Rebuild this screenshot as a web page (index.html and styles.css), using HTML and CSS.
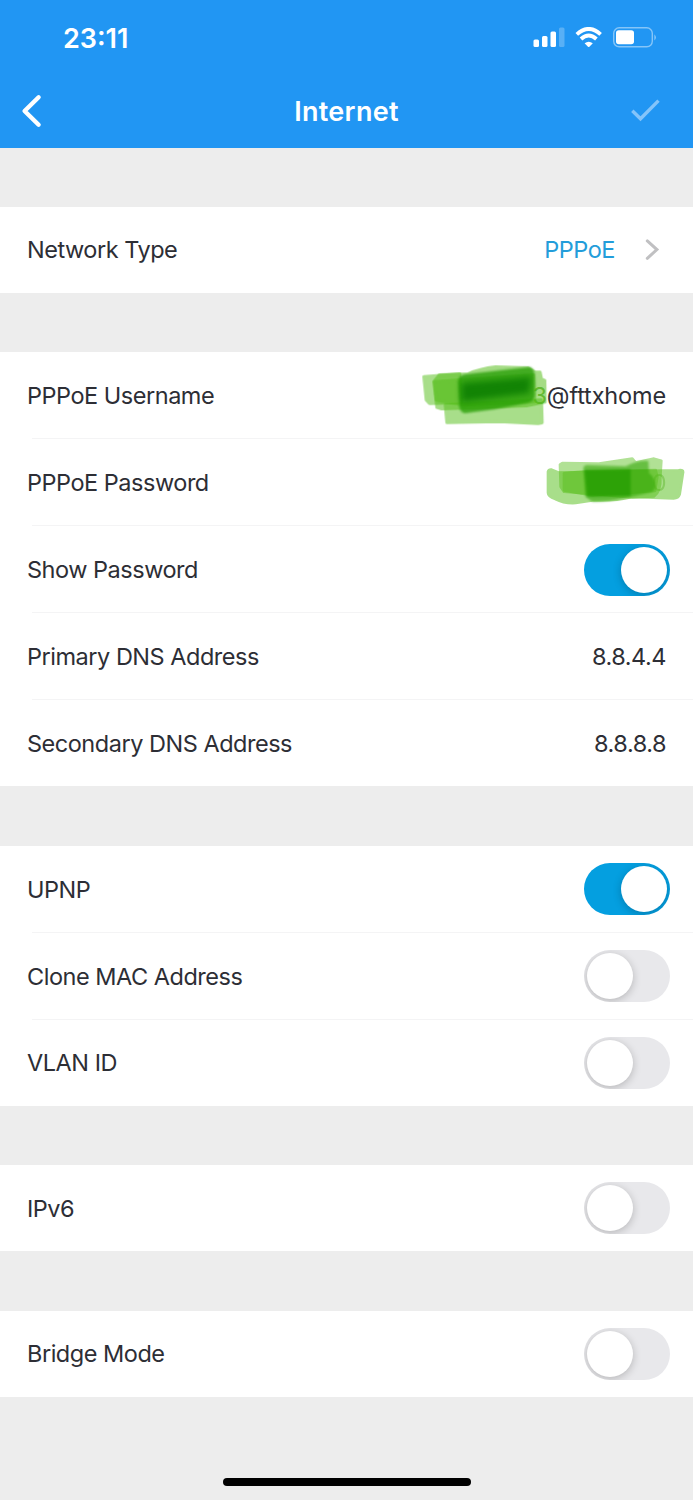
FILE: index.html
```html
<!DOCTYPE html>
<html lang="en">
<head>
    <meta charset="UTF-8">
    <meta name="viewport" content="width=device-width, initial-scale=1.0">
    <title>Internet</title>
    <link rel="stylesheet" href="styles.css">
</head>
<body>
    <div class="screen">
        <header class="header">
            <div class="status-bar">
                <span class="time">23:11</span>
                <svg class="status-icons" width="124" height="22" viewBox="0 0 124 22">
                    <g fill="#fff">
                        <rect x="0.5" y="12.5" width="5.5" height="7.5" rx="1.5"/>
                        <rect x="9" y="9" width="5.5" height="11" rx="1.5"/>
                        <rect x="17.5" y="4.5" width="5.5" height="15.5" rx="1.5"/>
                        <rect x="26" y="0.5" width="5.5" height="19.5" rx="1.5" opacity="0.25"/>
                        <path d="M55 19.7 L51.6 16.2 Q55.7 13.2 59.8 16.2 L56.4 19.7 Q55.7 20.3 55 19.7Z"/>
                        <rect x="83" y="3.3" width="18" height="14" rx="2.8"/>
                        <path d="M121.5 7.2 Q124 10.5 121.5 13.6Z" opacity="0.6"/>
                    </g>
                    <g fill="none" stroke="#fff" stroke-width="3.8">
                        <path d="M43.8 7.4 Q55.7 -3.6 67.6 7.4"/>
                        <path d="M48 12 Q55.7 4.8 63.4 12"/>
                    </g>
                    <rect x="80.7" y="0.8" width="38.6" height="19" rx="5.5" fill="none" stroke="#fff" stroke-width="1.4" opacity="0.45"/>
                </svg>
            </div>
            <div class="nav-bar">
                <svg width="24" height="36" viewBox="0 0 24 36" fill="none" stroke="#fff" stroke-width="4.4" stroke-linecap="round" stroke-linejoin="round">
                    <path d="M18.6 4.3 L4.6 18 L18.6 31.7"/>
                </svg>
                <h1 class="title">Internet</h1>
                <svg class="done" width="30" height="24" viewBox="0 0 30 24" fill="none" stroke="#84c4fa" stroke-width="3.4">
                    <path d="M2.3 11.8 L10.5 19.8 L28.5 1.6"/>
                </svg>
            </div>
        </header>

        <main class="content">
            <section class="group">
                <div class="row">
                    <span class="label">Network Type</span>
                    <span class="link">
                        PPPoE
                        <svg width="16" height="22" viewBox="0 0 16 22" fill="none" stroke="#c0c0c2" stroke-width="3" stroke-linecap="round">
                            <path d="M3.3 1.9 L12.9 10.6 L3.3 19.3"/>
                        </svg>
                    </span>
                </div>
            </section>

            <section class="group">
                <div class="row">
                    <span class="label">PPPoE Username</span>
                    <span class="value username"><span class="ghost">3</span>@fttxhome
                        <svg class="marker marker-user" width="128" height="64" viewBox="34 42 384 192">
                            <g class="ink" fill="#53bd16" stroke="#53bd16" stroke-width="10" stroke-linejoin="round">
                                <path d="M43 80 L150 72 L155 157 L60 160 L50 150Z" opacity=".5"/>
                                <path d="M107 165 L395 150 L397 218 L385 220 L270 214 L112 217Z" opacity=".5"/>
                                <path d="M73 95 L89 75 L175 72 Q210 56 258 51 L355 54 L376 67 L391 67 L395 87 L405 92 L406 156 L350 167 L96 176 L82 172Z" opacity=".52"/>
                                <path d="M75 95 L372 75 L375 155 L160 165 L80 150Z" opacity=".42"/>
                            </g>
                            <path class="soft" d="M145 94 Q148 75 167 73 L360 51 Q375 56 374 76 L375 136 Q373 156 352 159 L255 178 L165 190 Q151 188 149 169Z" fill="#239c00" opacity=".75"/>
                            <path class="core" d="M155 98 L365 80 L359 130 L155 155Z" fill="#087a00" opacity=".8"/>
                        </svg>
                    </span>
                </div>
                <div class="row">
                    <span class="label">PPPoE Password</span>
                    <span class="value">
                        <svg class="marker marker-pass" width="142" height="50" viewBox="408 318 426 150">
                            <g class="ink" fill="#53bd16" stroke="#53bd16" stroke-width="8" stroke-linejoin="round">
                                <path d="M417 365 Q419 358 428 359 L450 368 L809 361 Q824 358 822 368 L812 433 Q808 445 794 445 L670 441 Q615 454 550 451 L500 459 Q465 461 439 447 Q417 439 417 428Z" opacity=".5"/>
                                <path d="M453 344 L460 339 L570 341 L670 326 L680 338 L735 326 L757 332 L754 380 Q756 426 735 439 L670 442 L530 430 L465 425 L455 410Z" opacity=".45"/>
                                <path d="M465 370 L530 364 L740 360 L745 380 L738 423 L550 436 L465 421Z" opacity=".4"/>
                            </g>
                            <path class="soft" d="M523 354 Q525 345 535 345 L650 349 Q690 330 718 333 L720 370 Q738 380 738 410 Q738 426 718 429 L650 444 Q580 458 550 455 L529 440Z" fill="#2ca400" opacity=".55"/>
                            <path class="soft" d="M527 360 L665 358 L665 438 L535 440Z" fill="#229c00" opacity=".7"/>
                        </svg>
                        <span class="ghost ghost-end">0</span>
                    </span>
                </div>
                <div class="row">
                    <span class="label">Show Password</span>
                    <span class="switch on"></span>
                </div>
                <div class="row">
                    <span class="label">Primary DNS Address</span>
                    <span class="value">8.8.4.4</span>
                </div>
                <div class="row">
                    <span class="label">Secondary DNS Address</span>
                    <span class="value">8.8.8.8</span>
                </div>
            </section>

            <section class="group">
                <div class="row">
                    <span class="label">UPNP</span>
                    <span class="switch on"></span>
                </div>
                <div class="row">
                    <span class="label">Clone MAC Address</span>
                    <span class="switch"></span>
                </div>
                <div class="row">
                    <span class="label">VLAN ID</span>
                    <span class="switch"></span>
                </div>
            </section>

            <section class="group">
                <div class="row">
                    <span class="label">IPv6</span>
                    <span class="switch"></span>
                </div>
            </section>

            <section class="group">
                <div class="row">
                    <span class="label">Bridge Mode</span>
                    <span class="switch"></span>
                </div>
            </section>
        </main>
        <div class="home-indicator"></div>
    </div>
</body>
</html>
```
FILE: styles.css
```css
* {
    box-sizing: border-box;
}
body {
    margin: 0;
    background: #fff;
    font-family: Inter, "Liberation Sans", sans-serif;
    color: #2d2e35;
}
.screen {
    width: 693px;
    height: 1500px;
    display: flex;
    flex-direction: column;
    background: #ededed;
    overflow: hidden;
}
.header {
    height: 148px;
    background: #2196f3;
    color: #fff;
}
.status-bar {
    height: 74px;
    padding: 2px 36px 0 63px;
    display: flex;
    justify-content: space-between;
    align-items: center;
}
.time {
    font-size: 27px;
    font-weight: 600;
}
.nav-bar {
    height: 74px;
    padding: 0 33px 0 20px;
    display: grid;
    grid-template-columns: 30px 1fr 30px;
    align-items: center;
}
.title {
    margin: 0;
    padding-left: 13px;
    font-size: 27px;
    font-weight: 600;
    letter-spacing: 0.3px;
    text-align: center;
}
.content {
    flex: 1;
    padding-top: 58.7px;
    display: flex;
    flex-direction: column;
    gap: 59.45px;
}
.group {
    background: #fff;
}
.row {
    height: 87px;
    padding: 0 27px;
    display: flex;
    justify-content: space-between;
    align-items: center;
    position: relative;
    font-size: 23.5px;
    letter-spacing: -0.48px;
}
.row:last-child {
    height: 86.1px;
}
.row:not(:last-child)::after {
    content: "";
    position: absolute;
    left: 32px;
    right: 0;
    bottom: 0;
    height: 1px;
    background: #f4f4f5;
}
.link {
    display: flex;
    align-items: center;
    gap: 29px;
    padding-right: 6px;
    color: #239dda;
}
.value {
    position: relative;
}
.username {
    letter-spacing: -0.15px;
}
.ghost {
    color: #78b956;
}
.ghost-end {
    opacity: 0.5;
}
.marker {
    position: absolute;
    z-index: 1;
}
.marker-user {
    right: 117px;
    top: -17px;
}
.marker-pass {
    right: -21px;
    top: -12px;
}
.ink {
    filter: blur(1.5px);
}
.soft {
    filter: blur(3px);
}
.core {
    filter: blur(10px);
}
.switch {
    width: 85.5px;
    height: 52px;
    margin-right: -3.5px;
    padding: 3px;
    display: flex;
    border-radius: 26px;
    background: #e8e8eb;
    overflow: hidden;
}
.switch::before {
    content: "";
    width: 46px;
    height: 46px;
    border-radius: 50%;
    background: #fff;
    box-shadow: 0 2px 8px rgba(0, 0, 0, 0.22);
}
.switch.on {
    justify-content: flex-end;
    background: #049fe0;
}
.home-indicator {
    width: 248px;
    height: 8px;
    margin: 0 auto 14px;
    border-radius: 4px;
    background: #000;
}
```
